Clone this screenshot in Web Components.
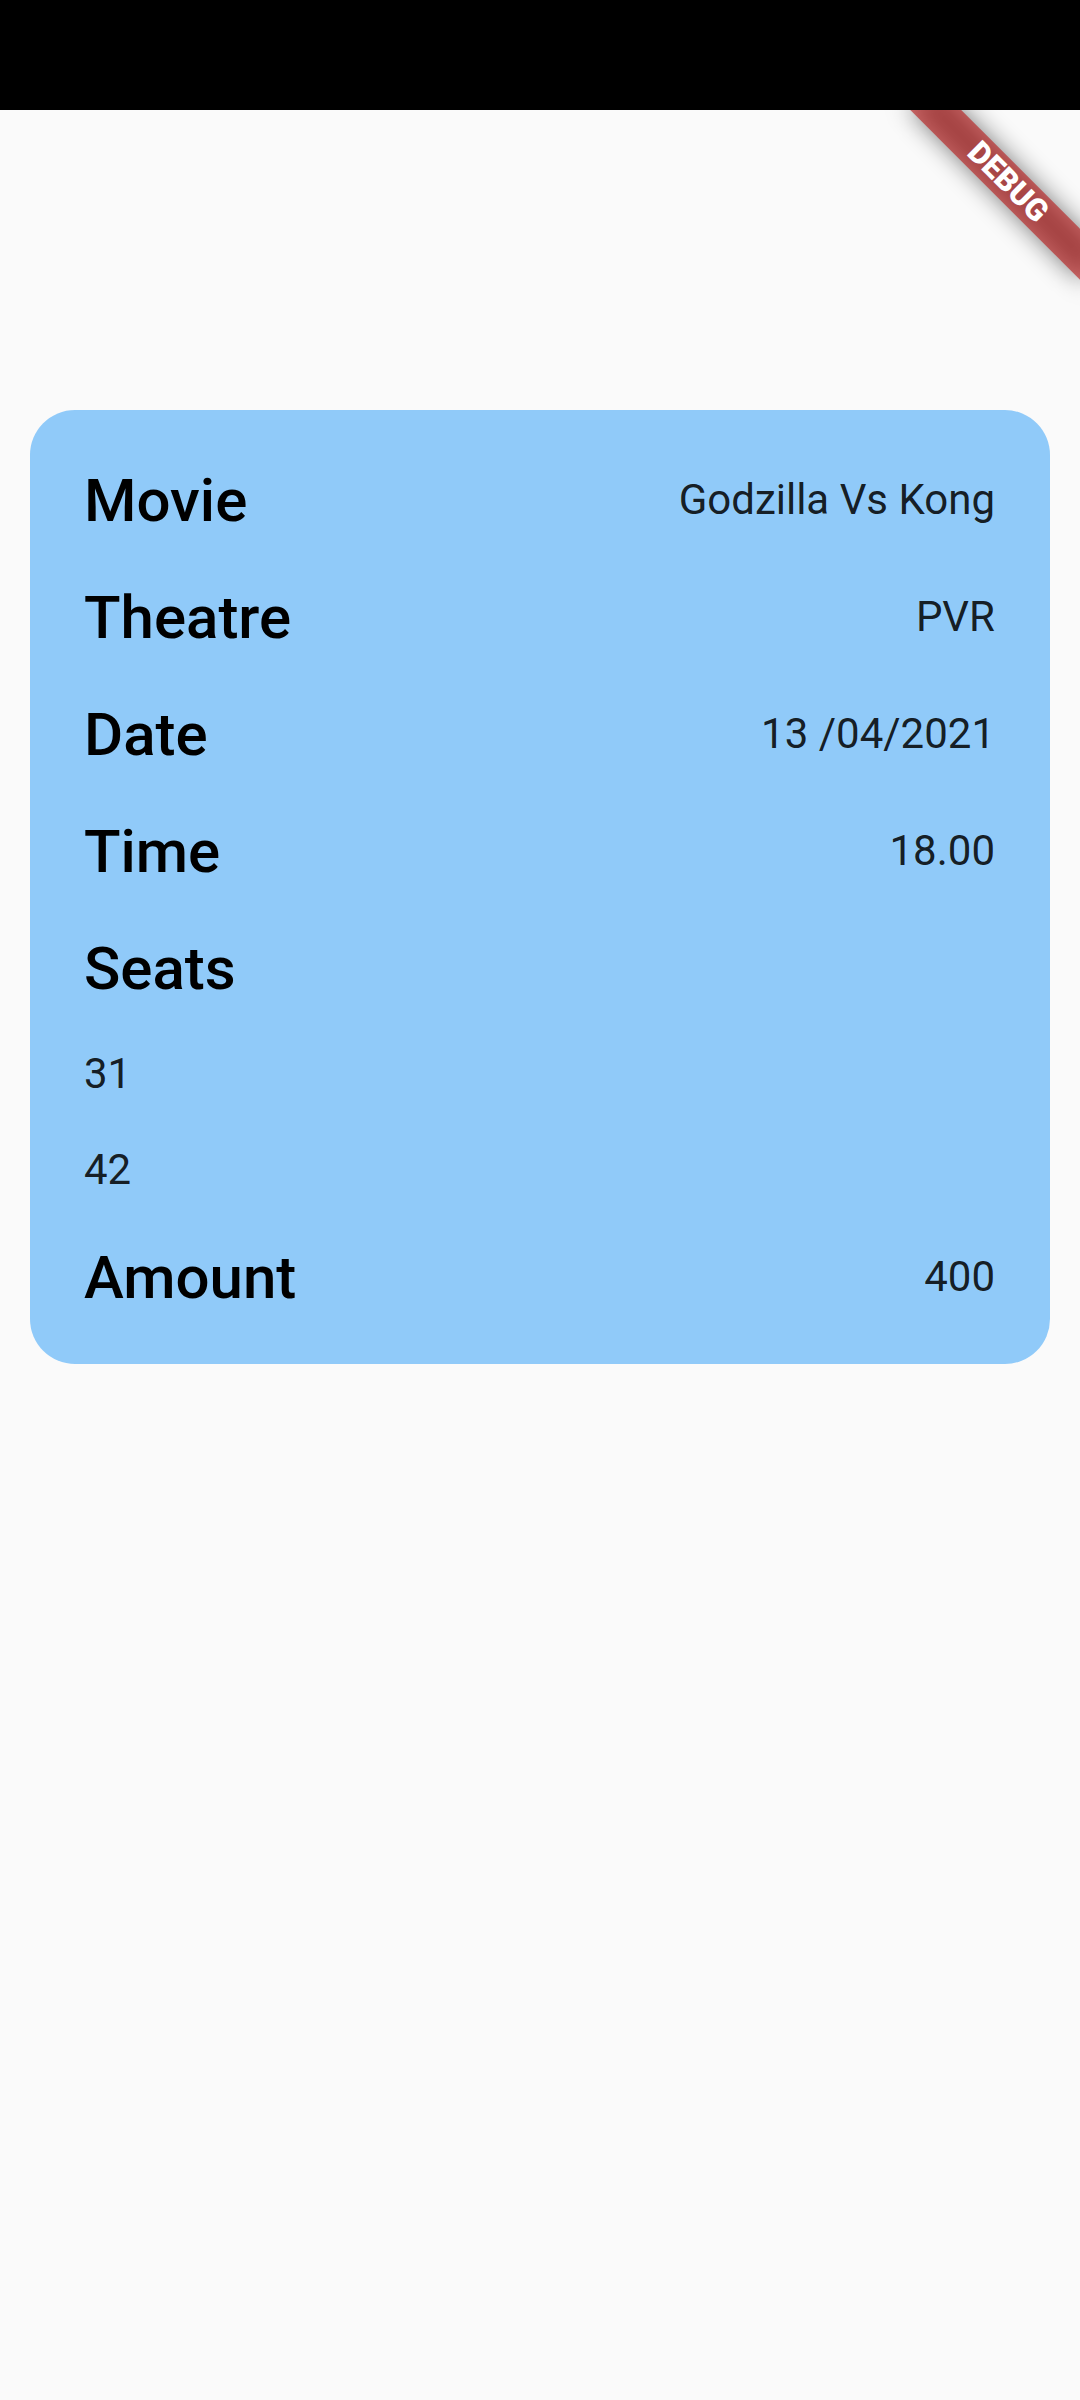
<!DOCTYPE html>
<html lang="en">
<head>
<meta charset="utf-8">
<meta name="viewport" content="width=device-width, initial-scale=1">
<title>Ticket</title>
<style>
  body { margin: 0; background: #fafafa; font-family: Roboto, sans-serif; }
</style>
</head>
<body>
<app-screen>
  <debug-banner slot="banner">DEBUG</debug-banner>
  <ticket-card>
    <ticket-row label="Movie">Godzilla Vs Kong</ticket-row>
    <ticket-row label="Theatre">PVR</ticket-row>
    <ticket-row label="Date">13 /04/2021</ticket-row>
    <ticket-row label="Time">18.00</ticket-row>
    <ticket-row label="Seats"></ticket-row>
    <seat-number>31</seat-number>
    <seat-number>42</seat-number>
    <ticket-row label="Amount">400</ticket-row>
  </ticket-card>
</app-screen>
<script>
const define = (name, html, setup) => customElements.define(name, class extends HTMLElement {
  constructor() {
    super();
    this.attachShadow({ mode: 'open' }).innerHTML = html;
  }
  connectedCallback() { if (setup) setup(this); }
});

define('app-screen', `
  <style>
    :host { display: flex; flex-direction: column; min-height: 100vh; background: #fafafa; }
    header { height: 110px; background: #000; }
    main { position: relative; flex: 1; padding: 300px 30px 30px; }
  </style>
  <header></header>
  <main><slot name="banner"></slot><slot></slot></main>
`);

define('debug-banner', `
  <style>
    :host { display: block; position: absolute; top: 0; right: 0; width: 240px; height: 240px; overflow: hidden; }
    .ribbon { position: absolute; left: 120px; top: 84px; width: 240px; height: 36px;
      transform-origin: 120px -84px; transform: rotate(45deg); }
    .shadow, .strip { position: absolute; inset: 0; }
    .shadow { background: rgba(0, 0, 0, .5); filter: blur(12px); }
    .strip { background: rgba(183, 28, 28, .63); color: #fff; font-size: 31px; font-weight: 900;
      line-height: 36px; text-align: center; }
  </style>
  <div class="ribbon"><div class="shadow"></div><div class="strip"><slot></slot></div></div>
`);

define('ticket-card', `
  <style>
    :host { display: flex; flex-direction: column; gap: 45px; padding: 55px 55px 50px 54px;
      background: #90caf9; border-radius: 45px; }
  </style>
  <slot></slot>
`);

define('ticket-row', `
  <style>
    :host { display: flex; justify-content: space-between; align-items: center; }
    .label { color: #000; font-size: 60px; font-weight: 500; line-height: 72px; }
    .value { color: rgba(0, 0, 0, .87); font-size: 42px; line-height: 48px; padding-bottom: 3px; }
  </style>
  <span class="label"></span><span class="value"><slot></slot></span>
`, el => { el.shadowRoot.querySelector('.label').textContent = el.getAttribute('label'); });

define('seat-number', `
  <style>
    :host { display: block; color: rgba(0, 0, 0, .87); font-size: 42px; line-height: 48px; padding-bottom: 3px; }
  </style>
  <slot></slot>
`);
</script>
</body>
</html>
